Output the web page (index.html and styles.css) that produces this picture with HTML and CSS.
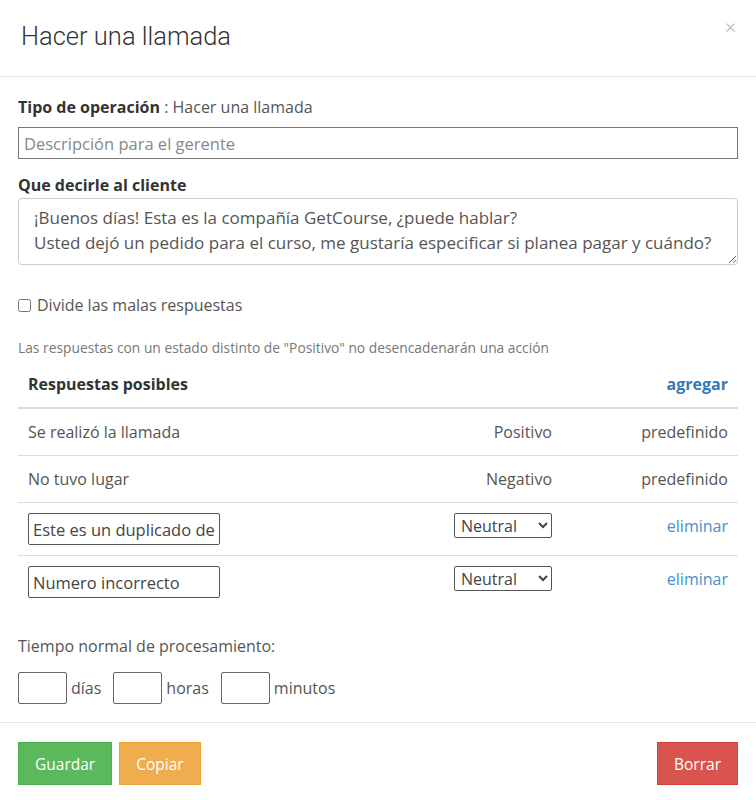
FILE: index.html
```html
<!DOCTYPE html>
<html lang="es">
<head>
    <meta charset="UTF-8">
    <title>Hacer una llamada</title>
    <link rel="stylesheet" href="styles.css">
</head>
<body>
    <div class="modal">
        <div class="modal-header">
            <h3>Hacer una llamada</h3>
            <span class="close">&times;</span>
        </div>
        <div class="modal-body">
            <div class="op-type"><b>Tipo de operación</b> : Hacer una llamada</div>
            <input class="wide-input" type="text" placeholder="Descripción para el gerente">

            <label class="field-label">Que decirle al cliente</label>
            <textarea class="script-text" rows="2">¡Buenos días! Esta es la compañía GetCourse, ¿puede hablar?
Usted dejó un pedido para el curso, me gustaría especificar si planea pagar y cuándo?</textarea>

            <label class="check-row"><input type="checkbox"> Divide las malas respuestas</label>

            <div class="hint">Las respuestas con un estado distinto de "Positivo" no desencadenarán una acción</div>

            <table class="answers">
                <thead>
                    <tr>
                        <th>Respuestas posibles</th>
                        <th></th>
                        <th class="right"><a href="#" class="add-link">agregar</a></th>
                    </tr>
                </thead>
                <tbody>
                    <tr>
                        <td>Se realizó la llamada</td>
                        <td class="right">Positivo</td>
                        <td class="right">predefinido</td>
                    </tr>
                    <tr>
                        <td>No tuvo lugar</td>
                        <td class="right">Negativo</td>
                        <td class="right">predefinido</td>
                    </tr>
                    <tr class="edit-row">
                        <td><input class="answer-input" type="text" value="Este es un duplicado de"></td>
                        <td class="right">
                            <select class="status-select">
                                <option>Neutral</option>
                                <option>Positivo</option>
                                <option>Negativo</option>
                            </select>
                        </td>
                        <td class="right"><a href="#" class="del-link">eliminar</a></td>
                    </tr>
                    <tr class="edit-row">
                        <td><input class="answer-input" type="text" value="Numero incorrecto"></td>
                        <td class="right">
                            <select class="status-select">
                                <option>Neutral</option>
                                <option>Positivo</option>
                                <option>Negativo</option>
                            </select>
                        </td>
                        <td class="right"><a href="#" class="del-link">eliminar</a></td>
                    </tr>
                </tbody>
            </table>

            <div class="time-label">Tiempo normal de procesamiento:</div>
            <div class="time-row">
                <input class="time-input" type="text"> <span>días</span>
                <input class="time-input" type="text"> <span>horas</span>
                <input class="time-input" type="text"> <span>minutos</span>
            </div>
        </div>
        <div class="modal-footer">
            <button class="btn btn-save">Guardar</button>
            <button class="btn btn-copy">Copiar</button>
            <button class="btn btn-delete">Borrar</button>
        </div>
    </div>
</body>
</html>
```

FILE: styles.css
```css
body {
    margin: 0;
    font-family: "Open Sans", "Liberation Sans", sans-serif;
    font-size: 16px;
    color: #555;
    background: #fff;
}

.modal {
    width: 756px;
}

.modal-header {
    height: 77px;
    border-bottom: 1px solid #e5e5e5;
    display: flex;
    justify-content: space-between;
    align-items: flex-start;
    padding: 0 20px 0 21px;
    box-sizing: border-box;
}

.modal-header h3 {
    margin: 20px 0 0;
    font-family: Roboto, sans-serif;
    font-size: 25.5px;
    font-weight: 300;
    line-height: 32px;
    color: #333;
}

.close {
    margin-top: 14px;
    font-family: Roboto, sans-serif;
    font-size: 21px;
    color: #bbb;
    font-weight: 300;
}

.modal-body {
    padding: 19px 18px 0;
}

.op-type {
    line-height: 22px;
}

.op-type b {
    color: #333;
}

.wide-input {
    display: block;
    width: 100%;
    box-sizing: border-box;
    height: 32px;
    margin-top: 9px;
    border: 1px solid #777;
    padding: 0 5px;
    font-family: inherit;
    font-size: 16.5px;
    color: #555;
}

.wide-input::placeholder {
    color: #888;
}

.field-label {
    display: block;
    margin-top: 15px;
    font-weight: bold;
    line-height: 22px;
    color: #333;
}

.script-text {
    display: block;
    width: 100%;
    box-sizing: border-box;
    height: 67px;
    margin-top: 2px;
    border: 1px solid #ccc;
    border-radius: 4px;
    padding: 6px 15px 4px;
    font-family: inherit;
    font-size: 17px;
    line-height: 25px;
    color: #555;
    resize: vertical;
}

.check-row {
    display: flex;
    align-items: center;
    gap: 4px;
    margin-top: 29px;
    line-height: 22px;
}

.check-row input {
    margin: 0 2px 0 0;
    width: 13px;
    height: 13px;
}

.hint {
    margin-top: 23px;
    font-size: 13.8px;
    color: #777;
    line-height: 18px;
}

.answers {
    width: 100%;
    border-collapse: collapse;
    margin-top: 9px;
}

.answers th,
.answers td {
    padding: 10px 10px;
    text-align: left;
    line-height: 26px;
    border-top: 1px solid #ddd;
}

.answers th {
    border-top: none;
    border-bottom: 2px solid #ddd;
    font-weight: bold;
    padding: 5px 10px 10px;
    color: #333;
}

.answers tbody tr:first-child td {
    border-top: none;
}

.answers .right {
    text-align: right;
}

.answers td:nth-child(3) {
    width: 156px;
}

.edit-row td {
    padding: 10px 10px 10px;
    vertical-align: top;
}

.add-link {
    color: #337ab7;
    text-decoration: none;
    font-weight: bold;
}

.del-link {
    color: #4a8fc9;
    text-decoration: none;
}

.answer-input {
    width: 192px;
    height: 32px;
    box-sizing: border-box;
    border: 1px solid #555;
    border-radius: 2px;
    padding: 0 4px;
    font-family: inherit;
    font-size: 16.5px;
    color: #444;
    display: block;
}

.status-select {
    width: 98px;
    height: 25px;
    border: 1px solid #555;
    border-radius: 2px;
    font-family: inherit;
    font-size: 16px;
    color: #444;
    background: #fff;
    padding: 0 2px;
}

.time-label {
    margin-top: 27px;
    line-height: 22px;
}

.time-row {
    display: flex;
    align-items: center;
    gap: 4px;
    margin-top: 15px;
}

.time-row span {
    margin-right: 8px;
}

.time-input {
    width: 49px;
    height: 32px;
    box-sizing: border-box;
    border: 1px solid #666;
    border-radius: 2px;
}

.modal-footer {
    margin-top: 18px;
    border-top: 1px solid #e5e5e5;
    padding: 19px 18px;
    display: flex;
    gap: 7px;
}

.btn {
    height: 43px;
    padding: 0 16px;
    border: 1px solid transparent;
    color: #fff;
    font-family: inherit;
    font-size: 15.5px;
    cursor: pointer;
}

.btn-save {
    background: #5cb85c;
    border-color: #4cae4c;
}

.btn-copy {
    background: #f0ad4e;
    border-color: #eea236;
}

.btn-delete {
    margin-left: auto;
    background: #d9534f;
    border-color: #d43f3a;
}
```
